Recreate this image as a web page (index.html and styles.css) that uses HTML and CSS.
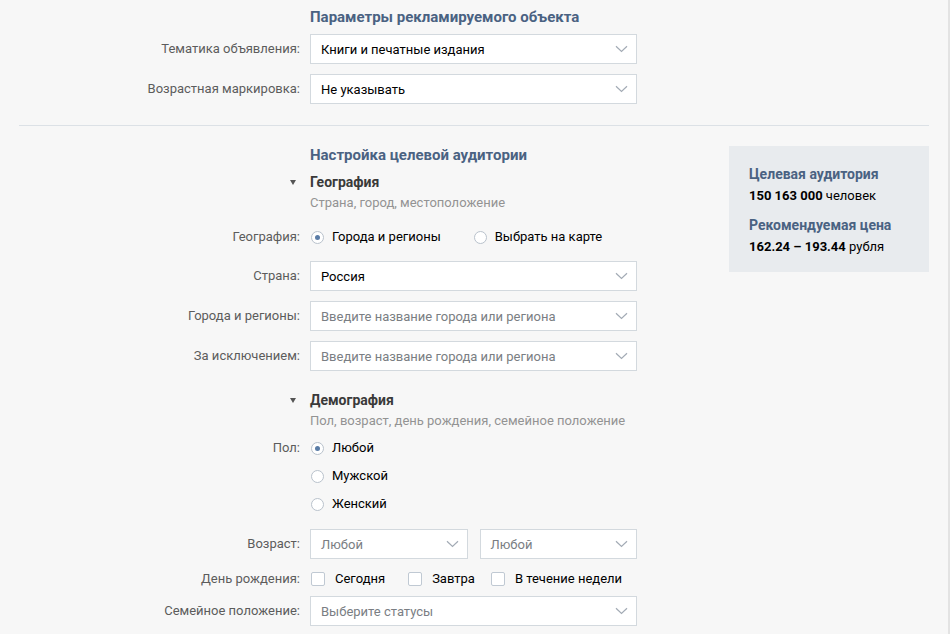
FILE: index.html
```html
<!DOCTYPE html>
<html lang="ru">

<head>
<meta charset="utf-8" />
<title>Настройка рекламного объявления</title>
<link rel="stylesheet" href="styles.css">
</head>

<body>
<div class="page">

  <!-- параметры объекта -->
  <div class="section first">
    <div class="row head-row">
      <div></div>
      <div class="section-title">Параметры рекламируемого объекта</div>
    </div>

    <div class="row field">
      <div class="label">Тематика объявления:</div>
      <div class="select"><span>Книги и печатные издания</span><svg class="chev" width="13" height="8" viewBox="0 0 13 8"><path d="M1 1.2l5.5 5.3 5.5-5.3" /></svg></div>
    </div>

    <div class="row field">
      <div class="label">Возрастная маркировка:</div>
      <div class="select"><span>Не указывать</span><svg class="chev" width="13" height="8" viewBox="0 0 13 8"><path d="M1 1.2l5.5 5.3 5.5-5.3" /></svg></div>
    </div>
  </div>

  <div class="divider"></div>

  <!-- целевая аудитория -->
  <div class="audience">
    <div class="form">
      <div class="row head-row">
        <div></div>
        <div class="section-title">Настройка целевой аудитории</div>
      </div>

      <div class="row group-head">
        <div class="arrow-cell"><span class="arrow"></span></div>
        <div>
          <div class="group-title">География</div>
          <div class="group-sub">Страна, город, местоположение</div>
        </div>
      </div>

      <div class="row line-row">
        <div class="label">География:</div>
        <div class="inline">
          <label class="radio on"><span class="circle"></span>Города и регионы</label>
          <label class="radio"><span class="circle"></span>Выбрать на карте</label>
        </div>
      </div>

      <div class="row field">
        <div class="label">Страна:</div>
        <div class="select"><span>Россия</span><svg class="chev" width="13" height="8" viewBox="0 0 13 8"><path d="M1 1.2l5.5 5.3 5.5-5.3" /></svg></div>
      </div>

      <div class="row field">
        <div class="label">Города и регионы:</div>
        <div class="select"><span class="ph">Введите название города или региона</span><svg class="chev" width="13" height="8" viewBox="0 0 13 8"><path d="M1 1.2l5.5 5.3 5.5-5.3" /></svg></div>
      </div>

      <div class="row field">
        <div class="label">За исключением:</div>
        <div class="select"><span class="ph">Введите название города или региона</span><svg class="chev" width="13" height="8" viewBox="0 0 13 8"><path d="M1 1.2l5.5 5.3 5.5-5.3" /></svg></div>
      </div>

      <div class="row group-head demo">
        <div class="arrow-cell"><span class="arrow"></span></div>
        <div>
          <div class="group-title">Демография</div>
          <div class="group-sub">Пол, возраст, день рождения, семейное положение</div>
        </div>
      </div>

      <div class="row sex-row">
        <div class="label">Пол:</div>
        <div class="stack">
          <label class="radio on"><span class="circle"></span>Любой</label>
          <label class="radio"><span class="circle"></span>Мужской</label>
          <label class="radio"><span class="circle"></span>Женский</label>
        </div>
      </div>

      <div class="row field age-row">
        <div class="label">Возраст:</div>
        <div class="pair">
          <div class="select"><span class="ph">Любой</span><svg class="chev" width="13" height="8" viewBox="0 0 13 8"><path d="M1 1.2l5.5 5.3 5.5-5.3" /></svg></div>
          <div class="select"><span class="ph">Любой</span><svg class="chev" width="13" height="8" viewBox="0 0 13 8"><path d="M1 1.2l5.5 5.3 5.5-5.3" /></svg></div>
        </div>
      </div>

      <div class="row line-row bday">
        <div class="label">День рождения:</div>
        <div class="inline checks">
          <label class="check"><span class="box"></span>Сегодня</label>
          <label class="check"><span class="box"></span>Завтра</label>
          <label class="check"><span class="box"></span>В течение недели</label>
        </div>
      </div>

      <div class="row field family">
        <div class="label">Семейное положение:</div>
        <div class="select"><span class="ph">Выберите статусы</span><svg class="chev" width="13" height="8" viewBox="0 0 13 8"><path d="M1 1.2l5.5 5.3 5.5-5.3" /></svg></div>
      </div>
    </div><!-- end of form -->

    <div class="summary">
      <div class="sum-title">Целевая аудитория</div>
      <div class="sum-value"><b>150 163 000</b> человек</div>
      <div class="sum-title second">Рекомендуемая цена</div>
      <div class="sum-value"><b>162.24 – 193.44</b> рубля</div>
    </div>
  </div>

</div>
</body>

</html>
```

FILE: styles.css
```css
body {
  margin: 0;
  background-color: #f7f7f7;
  font-family: Roboto, "Liberation Sans", Arial, sans-serif;
  font-size: 13px;
  color: #000;
}

.page {
  width: 910px;
  height: 634px;
  padding: 0 19px;
  border-right: 2px solid #e3e3e3;
  overflow: hidden;
}

.first {
  padding-top: 7px;
}

.row {
  display: grid;
  grid-template-columns: 281px 327px;
  column-gap: 10px;
  align-items: center;
}

.section-title {
  font-size: 15px;
  font-weight: bold;
  line-height: 20px;
  color: #4a6282;
}

.field {
  margin-top: 10px;
}
.head-row + .field {
  margin-top: 7px;
}

.label {
  text-align: right;
  color: #5c5c5c;
  line-height: 20px;
  white-space: nowrap;
}

.select {
  height: 28px;
  background-color: #fff;
  border: 1px solid #d3d9de;
  display: flex;
  align-items: center;
  justify-content: space-between;
  padding: 0 8px 0 10px;
  white-space: nowrap;
}
.select .ph {
  color: #7a7e83;
}
.chev {
  flex: none;
}
.chev path {
  fill: none;
  stroke: #a3abb5;
  stroke-width: 1.2;
}

.divider {
  height: 1px;
  background-color: #dce1e6;
  margin-top: 21px;
}

.audience {
  display: flex;
  align-items: flex-start;
  margin-top: 19px;
}

.form {
  width: 618px;
  flex: none;
}

.summary {
  margin-left: 92px;
  margin-top: 1px;
  width: 160px;
  padding: 18px 20px 15px;
  background-color: #e8ebee;
  line-height: 21px;
}
.sum-title {
  font-weight: bold;
  font-size: 14px;
  color: #4a6282;
}
.sum-title.second {
  margin-top: 9px;
}
.sum-value b {
  font-weight: bold;
}

/* группы: География, Демография */
.group-head {
  margin-top: 7px;
  align-items: start;
}
.group-head.demo {
  margin-top: 19px;
}
.arrow-cell {
  text-align: right;
  padding-right: 4px;
  line-height: 20px;
}
.arrow {
  display: inline-block;
  width: 0;
  height: 0;
  border-left: 3.5px solid transparent;
  border-right: 3.5px solid transparent;
  border-top: 5px solid #555;
  vertical-align: middle;
}
.group-title {
  font-weight: bold;
  font-size: 14px;
  line-height: 20px;
  color: #3a3a3a;
}
.group-sub {
  line-height: 20px;
  margin-top: 1px;
  color: #939393;
}

.line-row {
  margin-top: 14px;
}
.line-row + .field {
  margin-top: 14px;
}

.inline {
  display: flex;
  align-items: center;
  line-height: 20px;
  white-space: nowrap;
}

.radio {
  display: flex;
  align-items: center;
  margin-right: 32px;
}
.circle {
  width: 13px;
  height: 13px;
  border: 1px solid #b9c2cc;
  border-radius: 50%;
  background-color: #fff;
  margin: 0 8px 0 1px;
  position: relative;
  box-sizing: border-box;
}
.radio.on .circle::after {
  content: "";
  position: absolute;
  left: 3px;
  top: 3px;
  width: 5px;
  height: 5px;
  border-radius: 50%;
  background-color: #5a7ca6;
}

.sex-row {
  margin-top: 7px;
  align-items: start;
}
.stack {
  display: flex;
  flex-direction: column;
  gap: 8px;
  line-height: 20px;
}

.age-row {
  margin-top: 15px;
}
.pair {
  display: flex;
  gap: 12px;
}
.pair .select {
  flex: 1;
}

.bday {
  margin-top: 10px;
}
.check {
  display: flex;
  align-items: center;
  margin-right: 22px;
}
.check:nth-child(2) {
  margin-right: 15px;
}
.box {
  width: 14px;
  height: 14px;
  box-sizing: border-box;
  border: 1px solid #c0c9d3;
  border-radius: 2px;
  background-color: #fff;
  margin: 0 10px 0 1px;
}

.bday + .family {
  margin-top: 7px;
}
```
